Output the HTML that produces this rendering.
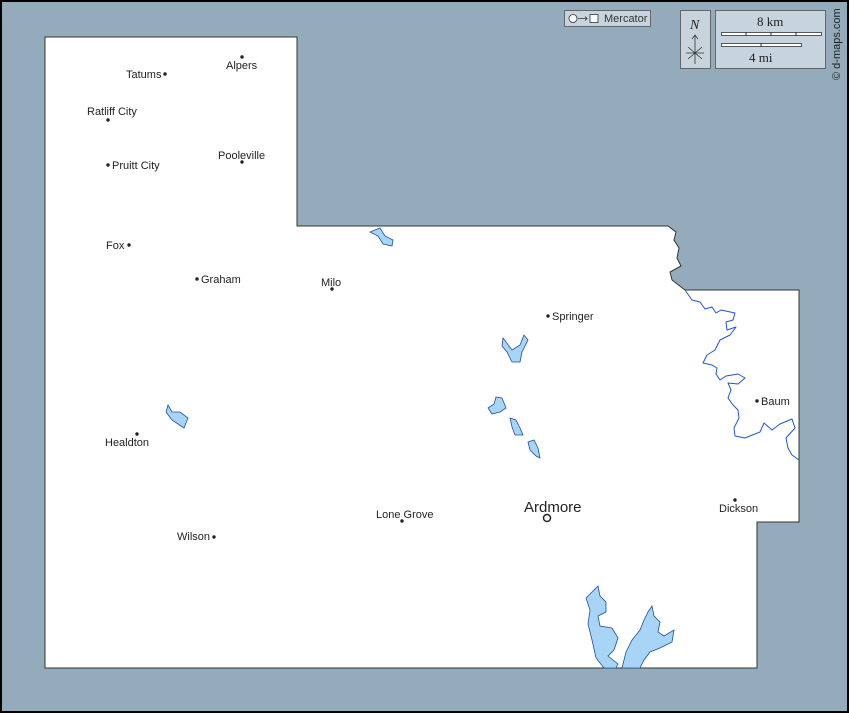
<!DOCTYPE html>
<html><head><style>
body{margin:0;width:849px;height:713px;overflow:hidden;background:#000}
svg{display:block}
text{font-family:"Liberation Sans",sans-serif;font-size:11px;fill:#222}
</style></head><body>
<svg width="849" height="713" viewBox="0 0 849 713">
<rect x="2" y="2" width="845" height="709" fill="#94abbb"/>
<path d="M45,37 L297,37 L297,226 L668,226 L676,232 L674,240 L679,248 L677,258 L681,266 L670,272 L672,280 L685,290 L799,290 L799,522 L757,522 L757,668 L45,668 Z" fill="#fff" stroke="#333" stroke-width="1"/>
<path d="M685,290 L692,300 L700,302 L705,309 L712,307 L716,313 L721,310 L735,313 L733,320 L726,322 L727,330 L736,327 L730,335 L720,340 L715,350 L707,355 L703,363 L712,365 L717,368 L716,374 L720,380 L726,376 L738,374 L745,378 L738,384 L728,383 L731,390 L728,398 L733,405 L738,410 L739,418 L734,428 L735,436 L745,438 L760,432 L764,423 L772,430 L780,424 L792,419 L795,428 L786,438 L788,448 L792,455 L799,460" fill="none" stroke="#2255cc" stroke-width="1" stroke-linejoin="round"/>
<g fill="#a8d4f5" stroke="#1d4fa0" stroke-width="0.8">
<path d="M370,232 L380,228 L385,236 L393,240 L392,246 L383,244 L378,236 Z"/>
<path d="M503,338 L512,350 L520,345 L524,335 L528,340 L522,352 L520,362 L512,362 L507,352 L502,346 Z"/>
<path d="M488,408 L494,404 L496,397 L502,398 L506,408 L500,412 L492,414 Z"/>
<path d="M510,418 L516,420 L520,428 L523,435 L515,435 L512,427 Z"/>
<path d="M528,442 L534,440 L538,448 L540,458 L536,456 L530,450 Z"/>
<path d="M168,405 L172,412 L180,412 L188,418 L184,428 L178,424 L172,420 L166,412 Z"/>
<path d="M586,598 L594,590 L598,586 L600,596 L606,602 L606,612 L598,616 L600,626 L612,628 L618,638 L614,650 L608,656 L618,664 L616,668 L604,668 L596,658 L592,640 L588,624 L590,610 Z"/>
<path d="M622,668 L626,652 L632,640 L640,630 L644,620 L648,612 L652,606 L654,616 L660,622 L658,632 L664,636 L674,630 L672,642 L660,648 L650,652 L644,660 L640,668 Z"/>
</g>
<g fill="#222">
<circle cx="242" cy="57" r="1.7"/><circle cx="165" cy="74" r="1.7"/><circle cx="108" cy="120" r="1.7"/><circle cx="108" cy="165" r="1.7"/><circle cx="242" cy="162" r="1.7"/><circle cx="129" cy="245" r="1.7"/><circle cx="197" cy="279" r="1.7"/><circle cx="332" cy="289" r="1.7"/><circle cx="548" cy="316" r="1.7"/><circle cx="757" cy="401" r="1.7"/><circle cx="137" cy="434" r="1.7"/><circle cx="735" cy="500" r="1.7"/><circle cx="402" cy="521" r="1.7"/><circle cx="214" cy="537" r="1.7"/>
</g>
<circle cx="547" cy="518" r="3.5" fill="#fff" stroke="#222" stroke-width="1.5"/>
<text x="226" y="69">Alpers</text>
<text x="126" y="78">Tatums</text>
<text x="87" y="115">Ratliff City</text>
<text x="112" y="169">Pruitt City</text>
<text x="218" y="159">Pooleville</text>
<text x="106" y="249">Fox</text>
<text x="201" y="283">Graham</text>
<text x="321" y="286">Milo</text>
<text x="552" y="320">Springer</text>
<text x="761" y="405">Baum</text>
<text x="105" y="446">Healdton</text>
<text x="719" y="512">Dickson</text>
<text x="376" y="518">Lone Grove</text>
<text x="177" y="540">Wilson</text>
<text x="524" y="512" style="font-size:15px">Ardmore</text>
<rect x="564.5" y="10.5" width="86" height="16" fill="#c8d4dd" stroke="#666"/>
<circle cx="573" cy="18.5" r="4" fill="#fff" stroke="#333" stroke-width="0.8"/>
<path d="M578,18.5 H587 M585,16.5 L587,18.5 L585,20.5" stroke="#333" stroke-width="0.8" fill="none"/>
<rect x="590" y="14.5" width="8" height="8" fill="#fff" stroke="#333" stroke-width="0.8"/>
<text x="604" y="22" style="font-size:11px;fill:#333">Mercator</text>
<rect x="680.5" y="10.5" width="30" height="58" fill="#c8d4dd" stroke="#666"/>
<text x="690" y="29" style="font-family:'Liberation Serif',serif;font-style:italic;font-size:14px">N</text>
<path d="M695,35 V64 M692,39 L695,35 L698,39 M688,47 L702,59 M702,47 L688,59 M686,53 H704" stroke="#333" stroke-width="0.8" fill="none"/>
<rect x="715.5" y="10.5" width="110" height="58" fill="#c8d4dd" stroke="#666"/>
<text x="757" y="26" style="font-family:'Liberation Serif',serif;font-size:13px">8 km</text>
<rect x="721.5" y="32.5" width="100" height="3" fill="#fff" stroke="#333" stroke-width="0.8"/>
<path d="M746,32 V36 M771,32 V36 M796,32 V36" stroke="#333"/>
<rect x="721.5" y="43.5" width="80" height="3" fill="#fff" stroke="#333" stroke-width="0.8"/>
<path d="M761,43 V47" stroke="#333"/>
<text x="749" y="62" style="font-family:'Liberation Serif',serif;font-size:13px">4 mi</text>
<text transform="translate(840,80) rotate(-90)" style="font-size:11px">© d-maps.com</text>
</svg>
</body></html>
